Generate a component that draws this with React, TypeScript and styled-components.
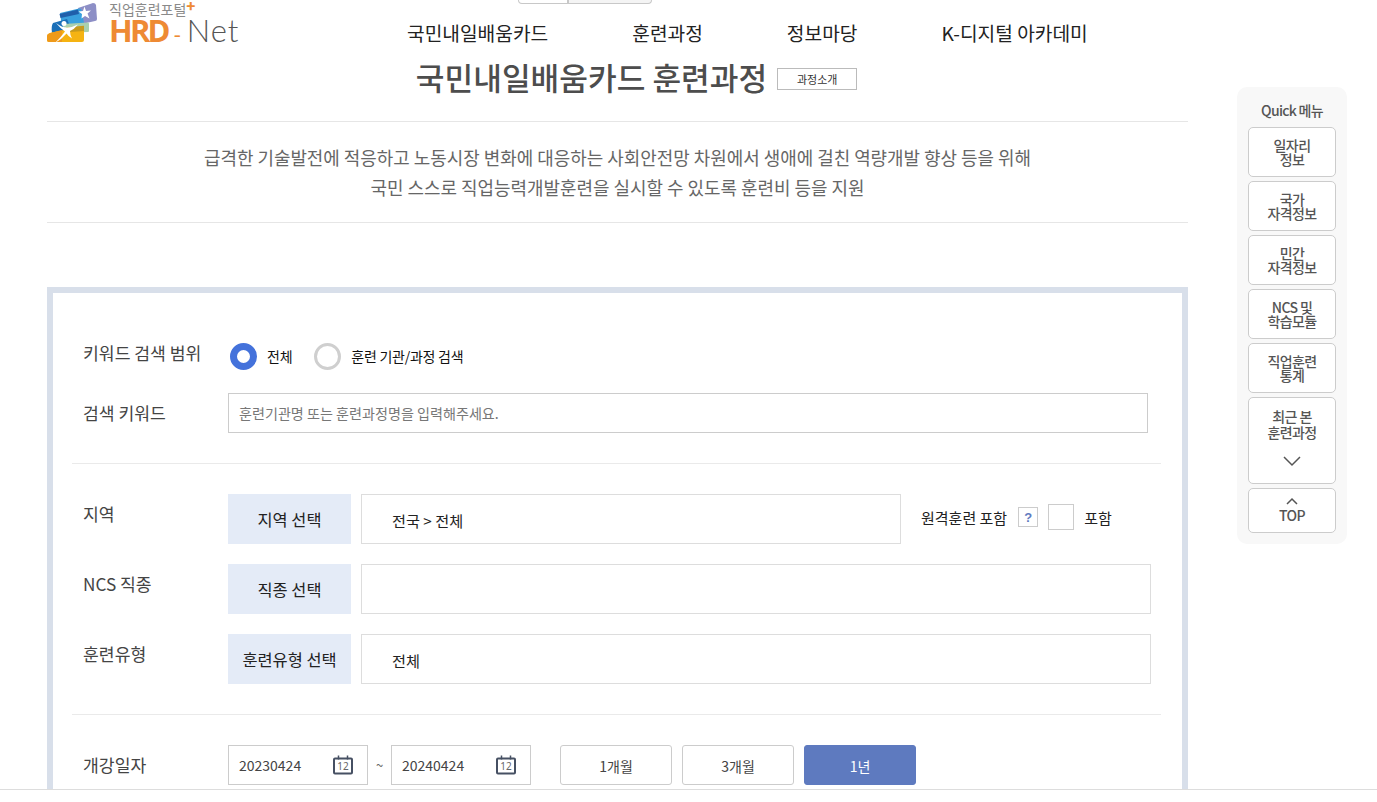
import React from "react";
import styled, { createGlobalStyle } from "styled-components";

const Global = createGlobalStyle`
  html, body { margin: 0; padding: 0; background: #fff; }
  body { font-family: "Noto Sans CJK KR", "Noto Sans", sans-serif; overflow: hidden; }
  * { box-sizing: border-box; }
`;

const Page = styled.div`
  position: relative;
  width: 1377px;
  height: 802px;
  overflow: hidden;
  background: #fff;
`;
const Column = styled.div`
  width: 1141px;
  margin-left: 47px;
`;
const TopTabs = styled.div`
  display: flex;
  width: 134px;
  height: 4px;
  margin-left: 471px;
`;
const TopTab = styled.div<{ $alt?: boolean }>`
  flex: ${(p) => (p.$alt ? "0 0 84px" : "0 0 50px")};
  border: 1px solid #c8c8c8;
  border-top: 0;
  border-radius: ${(p) => (p.$alt ? "0 0 5px 0" : "0 0 0 5px")};
  background: ${(p) => (p.$alt ? "#f4f4f4" : "#fff")};
`;
const Header = styled.header`
  display: flex;
  align-items: flex-start;
  height: 56px;
`;
const Logo = styled.div`
  display: flex;
  flex: 0 0 360px;
  height: 46px;
  margin-top: -4px;
`;
const LogoWords = styled.div`
  display: flex;
  flex-direction: column;
  margin-left: 10px;
`;
const Portal = styled.div`
  height: 16px;
  padding-top: 2px;
  font-size: 14px;
  line-height: 14px;
  color: #8a8a8a;
  white-space: nowrap;
  sup {
    color: #ee8a34;
    font-size: 15px;
    font-weight: 900;
    line-height: 0;
    vertical-align: 3px;
  }
`;
const Brand = styled.div`
  display: flex;
  align-items: baseline;
  height: 28px;
  font-family: "Open Sans", sans-serif;
  font-size: 31px;
  line-height: 28px;
  white-space: nowrap;
  b {
    color: #ee8a34;
    font-weight: 700;
    letter-spacing: -2.8px;
  }
  i {
    font-style: normal;
    color: #ee8a34;
    font-weight: 400;
    margin: 0 6px 0 6px;
    font-size: 22px;
  }
  span {
    font-family: "Lato", sans-serif;
    font-weight: 300;
    color: #555;
    font-size: 31px;
    letter-spacing: 0.9px;
  }
`;
const Nav = styled.nav`
  display: flex;
  gap: 84px;
  margin-top: 15px;
`;
const NavItem = styled.a`
  font-size: 19.2px;
  line-height: 28px;
  color: #222;
  white-space: nowrap;
`;
const TitleRow = styled.div`
  display: flex;
  justify-content: center;
  align-items: center;
  gap: 10px;
  height: 62px;
  padding: 0 0 28px 38px;
  border-bottom: 1px solid #e6e6e6;
`;
const Title = styled.h1`
  margin: 0;
  font-size: 31.2px;
  line-height: 40px;
  font-weight: 500;
  color: #4d4d4d;
  white-space: nowrap;
`;
const Badge = styled.span`
  display: flex;
  align-items: center;
  justify-content: center;
  width: 80px;
  height: 22px;
  border: 1px solid #bbb;
  font-size: 11px;
  color: #333;
  margin-top: 5px;
`;
const Lead = styled.p`
  margin: 0;
  height: 101px;
  padding-top: 20px;
  border-bottom: 1px solid #e6e6e6;
  font-size: 17.93px;
  line-height: 30px;
  color: #666;
  text-align: center;
`;
const Panel = styled.section`
  margin-top: 64px;
  height: 560px;
  border: 6px solid #d8dfea;
  padding: 49px 0 0 30px;
`;
const FormRow = styled.div<{ $h: number }>`
  display: flex;
  align-items: flex-start;
  height: ${(p) => p.$h}px;
`;
const Label = styled.div<{ $top?: number }>`
  flex: 0 0 145px;
  margin-top: ${(p) => p.$top ?? 8}px;
  font-size: 17.2px;
  line-height: 24px;
  color: #444;
  white-space: nowrap;
`;
const RadioDot = styled.span<{ $on?: boolean }>`
  flex: none;
  width: 27px;
  height: 27px;
  border-radius: 50%;
  border: ${(p) => (p.$on ? "7px solid #4472db" : "3px solid #cfcfcf")};
  background: #fff;
`;
const RadioText = styled.span<{ $gap: number }>`
  margin: 1px ${(p) => p.$gap}px 0 10px;
  font-size: 14px;
  line-height: 27px;
  letter-spacing: -0.25px;
  color: #111;
  white-space: nowrap;
`;
const RadioGroup = styled.div`
  display: flex;
  align-items: center;
  margin-left: 2px;
`;
const SearchBox = styled.div`
  width: 920px;
  height: 40px;
  border: 1px solid #ccc;
  padding-left: 10px;
  font-size: 14.1px;
  line-height: 38px;
  color: #777;
`;
const Divider = styled.hr<{ $mb: number }>`
  width: 1089px;
  height: 1px;
  border: 0;
  background: #eaeaea;
  margin: 0 0 ${(p) => p.$mb}px -11px;
`;
const PickButton = styled.div`
  flex: 0 0 123px;
  height: 50px;
  background: #e4ebf7;
  font-size: 16.4px;
  line-height: 50px;
  color: #222;
  text-align: center;
  white-space: nowrap;
`;
const ValueBox = styled.div<{ $w: number }>`
  flex: 0 0 ${(p) => p.$w}px;
  height: 50px;
  margin-left: 10px;
  border: 1px solid #ddd;
  padding-left: 30px;
  font-size: 15.2px;
  line-height: 50px;
  color: #222;
`;
const Remote = styled.div`
  display: flex;
  align-items: center;
  height: 46px;
  margin-left: 20px;
  font-size: 15px;
  color: #222;
  white-space: nowrap;
`;
const Help = styled.span`
  display: flex;
  align-items: center;
  justify-content: center;
  width: 20px;
  height: 20px;
  margin-left: 11px;
  border: 1px solid #ccc;
  font-family: "Liberation Sans", sans-serif;
  font-size: 13px;
  font-weight: 700;
  color: #5f7bbf;
`;
const Check = styled.span`
  width: 26px;
  height: 26px;
  margin: 0 10px 0 10px;
  border: 1px solid #ccc;
`;
const DateBox = styled.div`
  display: flex;
  align-items: center;
  justify-content: space-between;
  width: 140px;
  height: 40px;
  padding: 0 14px 0 10px;
  border: 1px solid #ccc;
  font-size: 14px;
  color: #444;
`;
const Tilde = styled.span`
  flex: 0 0 23px;
  font-size: 13px;
  line-height: 40px;
  text-align: center;
  color: #666;
`;
const PeriodGroup = styled.div`
  display: flex;
  gap: 10px;
  margin-left: 29px;
`;
const Period = styled.div<{ $on?: boolean }>`
  width: 112px;
  height: 40px;
  border: 1px solid ${(p) => (p.$on ? "#5e7abf" : "#ccc")};
  border-radius: 3px;
  background: ${(p) => (p.$on ? "#5e7abf" : "#fff")};
  color: ${(p) => (p.$on ? "#fff" : "#444")};
  font-size: 14px;
  line-height: 40px;
  text-align: center;
`;
const BottomBar = styled.div`
  position: absolute;
  left: 0;
  right: 0;
  top: 789px;
  bottom: 0;
  background: #fff;
  border-top: 1px solid #ddd;
`;
const Quick = styled.aside`
  position: absolute;
  left: 1237px;
  top: 87px;
  width: 110px;
  height: 457px;
  padding: 11px 11px 0;
  border-radius: 10px;
  background: #f8f8f8;
  display: flex;
  flex-direction: column;
  gap: 4px;
`;
const QuickTitle = styled.div`
  height: 25px;
  font-size: 14px;
  font-weight: 500;
  line-height: 25px;
  letter-spacing: -0.7px;
  color: #555;
  text-align: center;
`;
const QuickItem = styled.a<{ $h: number; $top: number; $lh?: number }>`
  display: block;
  flex: 0 0 ${(p) => p.$h}px;
  padding-top: ${(p) => p.$top}px;
  border: 1px solid #ccc;
  border-radius: 5px;
  background: #fff;
  font-size: 14px;
  font-weight: 500;
  line-height: ${(p) => p.$lh ?? 14}px;
  letter-spacing: -0.6px;
  color: #555;
  text-align: center;
  svg { display: block; margin: 0 auto; }
`;
const DownIcon = styled.svg`
  && { margin-top: 13px; }
`;
const UpIcon = styled.svg`
  && { margin-bottom: 3px; }
`;

const LogoMark = () => (
  <svg width="52" height="46" viewBox="47 0 52 46" aria-hidden="true">
    <path d="M78 8 L93 3 Q95.500 3 96 5 L97 19 Q97 21 95 21 L82 24 Z" fill="#8d8fc6" />
    <path d="M60 13 L79 8.500 Q81 8 81.500 10 L84 23 L62 27 Z" fill="#39a0dd" />
    <path d="M59.500 14 L78 9.500 L79 14 L60.500 18 Z" fill="#1f5faa" />
    <path d="M84.500 6.500 l1.500 4.500 5 -.5 -3.500 3 2 5 -4.500 -2.500 -3.500 2.500 .5 -4.500 -3.500 -2.500 4.500 -.5 Z" fill="#fff" />
    <path d="M53 23 L67 19 L72 31 L52 33 Q51 26 53 23 Z" fill="#1a6fb8" />
    <path d="M63 24 L88 22.500 Q89 22.500 89 24 L89 31 Q89 32 88 32 L63 33 Z" fill="#a9d0ae" />
    <path d="M50 33 L82 26 Q84 25.500 84 28 L84 40 Q84 42 82 42 L49 42 Q47 42 47 40 L47 36 Q47 34 50 33 Z" fill="#f5b312" />
    <path d="M47 36 Q47 34 50 33 L62 30 L62 42 L49 42 Q47 42 47 40 Z" fill="#ef9a1a" />
    <path d="M66 27.500 L84 25.800 L84 31 L70 32 Z" fill="#c79a1c" />
    <path d="M56 23 Q62 27.500 67 27.500 Q72 27.500 78 24.500 Q74 29.500 70 31 Q70 35 72 38.500 Q68 36 66.500 33.500 Q62 39 55 43 Q61 37 65 31.500 Q60 28 56 23 Z" fill="#fff" />
    <circle cx="64" cy="23.500" r="2.500" fill="#fff" />
  </svg>
);

const Calendar = () => (
  <svg width="20" height="20" viewBox="0 0 20 20" aria-hidden="true">
    <rect x="1" y="3.500" width="18" height="15" rx="1" fill="none" stroke="#465063" strokeWidth="2" />
    <path d="M5.500 .5v4M14.500 .5v4" stroke="#465063" strokeWidth="1.500" />
    <text x="10" y="15" textAnchor="middle" fontSize="10" fontFamily="Noto Sans, sans-serif" fill="#666">12</text>
  </svg>
);

export default function App() {
  return (
    <Page>
      <Global />
      <Column>
        <TopTabs>
          <TopTab />
          <TopTab $alt />
        </TopTabs>
        <Header>
          <Logo>
            <LogoMark />
            <LogoWords>
              <Portal>
                직업훈련포털<sup>+</sup>
              </Portal>
              <Brand>
                <b>HRD</b>
                <i>-</i>
                <span>Net</span>
              </Brand>
            </LogoWords>
          </Logo>
          <Nav>
            <NavItem>국민내일배움카드</NavItem>
            <NavItem>훈련과정</NavItem>
            <NavItem>정보마당</NavItem>
            <NavItem>K-디지털 아카데미</NavItem>
          </Nav>
        </Header>
        <TitleRow>
          <Title>국민내일배움카드 훈련과정</Title>
          <Badge>과정소개</Badge>
        </TitleRow>
        <Lead>
          급격한 기술발전에 적응하고 노동시장 변화에 대응하는 사회안전망 차원에서 생애에 걸친 역량개발 향상 등을 위해
          <br />
          국민 스스로 직업능력개발훈련을 실시할 수 있도록 훈련비 등을 지원
        </Lead>
        <Panel>
          <FormRow $h={51}>
            <Label $top={-1}>키워드 검색 범위</Label>
            <RadioGroup>
              <RadioDot $on />
              <RadioText $gap={22}>전체</RadioText>
              <RadioDot />
              <RadioText $gap={0}>훈련 기관/과정 검색</RadioText>
            </RadioGroup>
          </FormRow>
          <FormRow $h={70}>
            <Label>검색 키워드</Label>
            <SearchBox>훈련기관명 또는 훈련과정명을 입력해주세요.</SearchBox>
          </FormRow>
          <Divider $mb={30} />
          <FormRow $h={70}>
            <Label>지역</Label>
            <PickButton>지역 선택</PickButton>
            <ValueBox $w={540}>전국 &gt; 전체</ValueBox>
            <Remote>
              원격훈련 포함
              <Help>?</Help>
              <Check />
              포함
            </Remote>
          </FormRow>
          <FormRow $h={70}>
            <Label>NCS 직종</Label>
            <PickButton>직종 선택</PickButton>
            <ValueBox $w={790} />
          </FormRow>
          <FormRow $h={80}>
            <Label>훈련유형</Label>
            <PickButton>훈련유형 선택</PickButton>
            <ValueBox $w={790}>전체</ValueBox>
          </FormRow>
          <Divider $mb={30} />
          <FormRow $h={50}>
            <Label>개강일자</Label>
            <DateBox>
              20230424
              <Calendar />
            </DateBox>
            <Tilde>~</Tilde>
            <DateBox>
              20240424
              <Calendar />
            </DateBox>
            <PeriodGroup>
              <Period>1개월</Period>
              <Period>3개월</Period>
              <Period $on>1년</Period>
            </PeriodGroup>
          </FormRow>
        </Panel>
      </Column>
      <BottomBar />
      <Quick>
        <QuickTitle>Quick 메뉴</QuickTitle>
        <QuickItem $h={50} $top={10}>일자리<br />정보</QuickItem>
        <QuickItem $h={50} $top={10}>국가<br />자격정보</QuickItem>
        <QuickItem $h={50} $top={10}>민간<br />자격정보</QuickItem>
        <QuickItem $h={50} $top={10}>NCS 및<br />학습모듈</QuickItem>
        <QuickItem $h={50} $top={10}>직업훈련<br />통계</QuickItem>
        <QuickItem $h={87} $top={10} $lh={16}>
          최근 본<br />훈련과정
          <DownIcon width="18" height="18" viewBox="0 0 18 18" aria-hidden="true">
            <path d="M1 4l8 8 8-8" fill="none" stroke="#555" strokeWidth="1.500" />
          </DownIcon>
        </QuickItem>
        <QuickItem $h={45} $top={8}>
          <UpIcon width="14" height="8" viewBox="0 0 14 8" aria-hidden="true">
            <path d="M2 7l5-5 5 5" fill="none" stroke="#555" strokeWidth="1.500" />
          </UpIcon>
          TOP
        </QuickItem>
      </Quick>
    </Page>
  );
}
